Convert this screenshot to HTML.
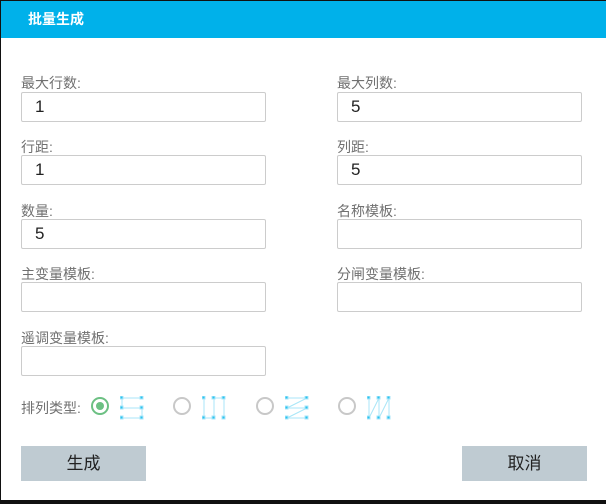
<!DOCTYPE html>
<html><head><meta charset="utf-8"><style>
*{margin:0;padding:0;box-sizing:border-box}
body{width:606px;height:504px;background:#111;position:relative;overflow:hidden;font-family:"Liberation Sans","Noto Sans CJK SC",sans-serif}
.dlg{position:absolute;left:1px;top:1px;width:605px;height:499px;background:#fff}
.hd{position:absolute;left:0;top:0;width:605px;height:37px;background:#00b1ea;color:#fff;font-size:14px;font-weight:bold;line-height:37px;padding-left:27px}
.lb{position:absolute;font-size:14px;color:#707070}
.in{position:absolute;width:245px;height:30px;border:1px solid #ccc;border-radius:2px;font-size:17px;color:#222;line-height:28px;padding-left:13px}
.btn{position:absolute;width:125px;height:35px;background:#bfcbd2;font-size:17px;color:#222;text-align:center;line-height:35px;top:445px}
.rd{position:absolute;top:396px;width:18px;height:18px;border:2px solid #c8c8c8;border-radius:50%}
svg{position:absolute;top:395px}
</style></head><body><div class="dlg">
<div class="hd">批量生成</div>
<div class="lb" style="left:20px;top:72px">最大行数:</div>
<div class="lb" style="left:336px;top:72px">最大列数:</div>
<div class="in" style="left:20px;top:91px">1</div>
<div class="in" style="left:336px;top:91px">5</div>
<div class="lb" style="left:20px;top:136px">行距:</div>
<div class="lb" style="left:336px;top:136px">列距:</div>
<div class="in" style="left:20px;top:154px">1</div>
<div class="in" style="left:336px;top:154px">5</div>
<div class="lb" style="left:20px;top:200px">数量:</div>
<div class="lb" style="left:336px;top:200px">名称模板:</div>
<div class="in" style="left:20px;top:218px">5</div>
<div class="in" style="left:336px;top:218px"></div>
<div class="lb" style="left:20px;top:263px">主变量模板:</div>
<div class="lb" style="left:336px;top:263px">分闸变量模板:</div>
<div class="in" style="left:20px;top:281px"></div>
<div class="in" style="left:336px;top:281px"></div>
<div class="lb" style="left:20px;top:327px">遥调变量模板:</div>
<div class="in" style="left:20px;top:345px"></div>
<div class="lb" style="left:20px;top:397px">排列类型:</div>
<div class="rd" style="left:90px;border-color:#6cc083"><div style="position:absolute;left:3px;top:3px;width:8px;height:8px;border-radius:50%;background:#6cc083"></div></div>
<svg style="left:119px" width="24" height="24" stroke="#a8e6f8" fill="#2bc3f0"><path d="M2 2H22M2 2V12H22V22H2" fill="none"/><rect x="0" y="0" width="3" height="3"/><rect x="20" y="0" width="3" height="3"/><rect x="0" y="10" width="3" height="3"/><rect x="20" y="10" width="3" height="3"/><rect x="0" y="20" width="3" height="3"/><rect x="20" y="20" width="3" height="3"/></svg>
<div class="rd" style="left:172px"></div>
<svg style="left:201px" width="24" height="24" stroke="#a8e6f8" fill="#2bc3f0"><path d="M2 2V22H12V2H22V22" fill="none"/><rect x="0" y="0" width="3" height="3"/><rect x="10" y="0" width="3" height="3"/><rect x="20" y="0" width="3" height="3"/><rect x="0" y="20" width="3" height="3"/><rect x="10" y="20" width="3" height="3"/><rect x="20" y="20" width="3" height="3"/></svg>
<div class="rd" style="left:255px"></div>
<svg style="left:284px" width="24" height="24" stroke="#a8e6f8" fill="#2bc3f0"><path d="M2 2H22L2 12H22L2 22H22" fill="none"/><rect x="0" y="0" width="3" height="3"/><rect x="20" y="0" width="3" height="3"/><rect x="0" y="10" width="3" height="3"/><rect x="20" y="10" width="3" height="3"/><rect x="0" y="20" width="3" height="3"/><rect x="20" y="20" width="3" height="3"/></svg>
<div class="rd" style="left:337px"></div>
<svg style="left:366px" width="24" height="24" stroke="#a8e6f8" fill="#2bc3f0"><path d="M2 2V22L12 2V22L22 2V22" fill="none"/><rect x="0" y="0" width="3" height="3"/><rect x="10" y="0" width="3" height="3"/><rect x="20" y="0" width="3" height="3"/><rect x="0" y="20" width="3" height="3"/><rect x="10" y="20" width="3" height="3"/><rect x="20" y="20" width="3" height="3"/></svg>
<div class="btn" style="left:20px">生成</div>
<div class="btn" style="left:461px">取消</div>
</div></body></html>
